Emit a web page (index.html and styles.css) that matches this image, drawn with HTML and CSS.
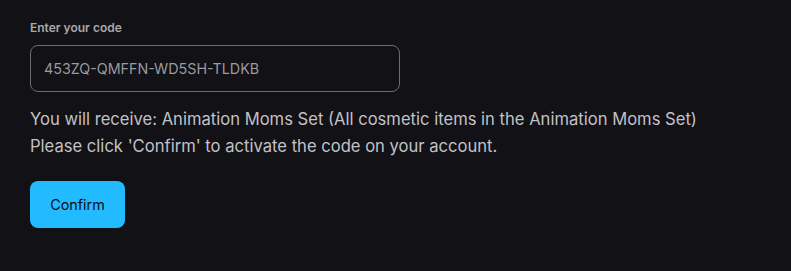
FILE: index.html
```html
<!DOCTYPE html>
<html>
<head>
<meta charset="utf-8">
<link rel="stylesheet" href="styles.css">
</head>
<body>
<div class="form">
  <label class="label">Enter your code</label>
  <div class="input">453ZQ-QMFFN-WD5SH-TLDKB</div>
  <p class="info">You will receive: Animation Moms Set (All cosmetic items in the Animation Moms Set)<br>Please click 'Confirm' to activate the code on your account.</p>
  <button class="btn">Confirm</button>
</div>
</body>
</html>
```
FILE: styles.css
```css
html, body {
  margin: 0;
  background: #111116;
  height: 100%;
}
body {
  font-family: Inter, "Noto Sans", sans-serif;
}
.form {
  padding: 20px 30px 0;
  display: flex;
  flex-direction: column;
  align-items: flex-start;
}
.label {
  font-size: 12px;
  font-weight: 600;
  color: #a9a9ad;
  line-height: 16px;
  margin-bottom: 9px;
}
.input {
  box-sizing: border-box;
  width: 370px;
  height: 47px;
  border: 1px solid #6b6b70;
  border-radius: 8px;
  padding: 0 13px;
  display: flex;
  align-items: center;
  font-size: 14.3px;
  color: #9a9aa0;
}
.info {
  margin: 14px 0 0;
  font-size: 16.6px;
  line-height: 27px;
  color: #c2c2c6;
}
.btn {
  margin-top: 21px;
  width: 95px;
  height: 47px;
  border: none;
  border-radius: 8px;
  background: #22bbff;
  color: #0d0d12;
  font-family: Inter, "Noto Sans", sans-serif;
  font-size: 14.4px;
  font-weight: 400;
  padding: 0;
}
```
